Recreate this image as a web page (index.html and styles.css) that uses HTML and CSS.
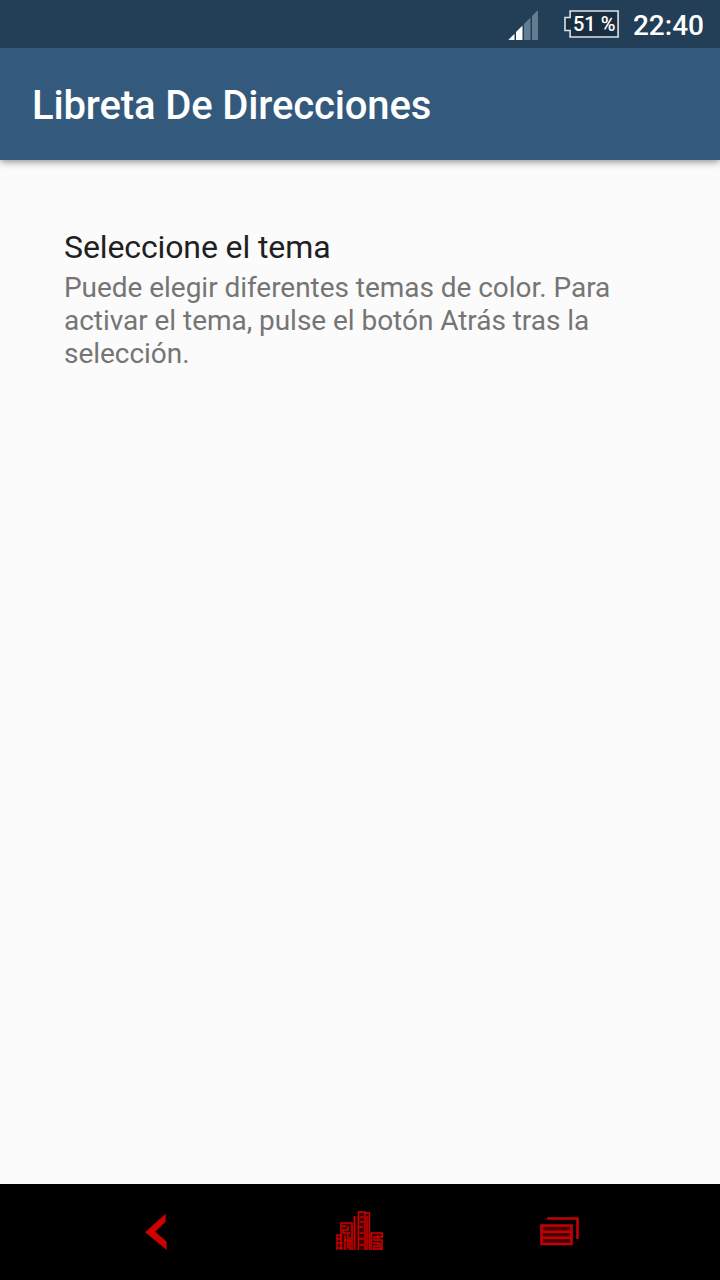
FILE: index.html
```html
<!DOCTYPE html>
<html lang="es">
<head>
<meta charset="utf-8">
<title>Libreta De Direcciones</title>
<link rel="stylesheet" href="styles.css">
</head>
<body>
<div class="screen">
  <div class="status-bar">
    <svg class="signal" width="30" height="30" viewBox="0 0 30 30">
      <path class="signal-on" d="M0.3 30L6.5 23.7V30ZM8 22L14.5 15.5V30H8Z"/>
      <path class="signal-off" d="M16 14L22.5 7.5V30H16ZM24 6L30 0V30H24Z"/>
    </svg>
    <div class="battery">
      <svg class="battery-shape" width="56" height="28" viewBox="0 0 56 28">
        <path d="M6.100 1H54.100V27H6.100V20.500H1V7.500H6.100Z"/>
      </svg>
      <span class="battery-text">51 %</span>
    </div>
    <span class="clock">22:40</span>
  </div>
  <header class="app-bar"><h1 class="title">Libreta De Direcciones</h1></header>
  <main class="content">
    <h2 class="item-title">Seleccione el tema</h2>
    <p class="item-summary">Puede elegir diferentes temas de color. Para<br>activar el tema, pulse el botón Atrás tras la<br>selección.</p>
  </main>
  <nav class="nav-bar">
    <svg class="back" width="24" height="38" viewBox="0 0 24 38">
      <path class="solid" d="M0 19.300L20.800 0.500L20.500 9L10.300 18.700L21.500 28.500L21.800 37Z"/>
    </svg>
    <svg class="home" width="48" height="42" viewBox="0 0 48 42">
      <path class="mass" d="M1 41V26H5V14H17V7H22V2H29V3H34V24H46V41Z"/>
      <g class="building">
        <path d="M5 41V14H16V41M18.500 41V7M22.500 41V3H29V41M33.500 41V4H29M35.500 41V24H46.500V28H38V31H46V41"/>
        <path d="M1 41V26H5V30H1M1 34H7M1 39H7M6 17H10M12 17V21H7V24H14M9 27V41M12 25V39M8 31H12M14 28V41"/>
        <path d="M31 7V41M24 8H28M24 13H28M23 18H27M24 24H28M23 30H28M24 36H28M37 34H42V37H38V41M42 26V32M44 34V41M37 40H46"/>
      </g>
    </svg>
    <svg class="recents" width="40" height="30" viewBox="0 0 40 30">
      <path class="outline" d="M7 2.500H37.500V23"/>
      <path class="outline cards" d="M1.500 9.500H31.500V28H1.500ZM1.500 15.700H31.500M1.500 21.800H31.500"/>
    </svg>
  </nav>
</div>
</body>
</html>
```
FILE: styles.css
```css
body {
  margin: 0;
  font-family: Roboto, "Noto Sans", sans-serif;
}
.screen {
  display: flex;
  flex-direction: column;
  width: 720px;
  height: 1280px;
  background: #fbfbfb;
  overflow: hidden;
}
.status-bar {
  position: relative;
  z-index: 1;
  display: flex;
  justify-content: flex-end;
  align-items: center;
  box-sizing: border-box;
  height: 48px;
  padding: 0 16px 0 0;
  background: #233e57;
  color: #fff;
}
.signal { margin: 2px 26px 0 0; }
.signal-on { fill: #fff; }
.signal-off { fill: #637c90; }
.battery {
  display: grid;
  width: 56px;
  height: 28px;
  margin-right: 13px;
}
.battery-shape, .battery-text { grid-area: 1 / 1; }
.battery-shape path {
  fill: #1b2e40;
  stroke: #d9e2eb;
  stroke-width: 1.6;
}
.battery-text {
  padding-left: 9px;
  font-size: 20px;
  font-weight: 500;
  line-height: 28px;
  white-space: nowrap;
}
.clock {
  font-size: 28px;
  font-weight: 500;
  line-height: 48px;
  padding-top: 3px;
}
.app-bar {
  display: flex;
  align-items: center;
  height: 112px;
  padding: 0 32px;
  background: #335a7c;
  box-shadow: 0 2px 7px rgba(0, 0, 0, .42);
}
.title {
  margin: 4px 0 0;
  color: #fff;
  font-size: 40px;
  font-weight: 500;
  letter-spacing: -.14px;
  line-height: 48px;
  white-space: nowrap;
}
.content {
  flex: 1;
  padding: 68px 64px 0;
}
.item-title {
  margin: 0;
  color: #202020;
  font-size: 32px;
  font-weight: 400;
  letter-spacing: -.11px;
  line-height: 38px;
}
.item-summary {
  margin: 5px 0 0;
  color: #757575;
  font-size: 28px;
  letter-spacing: -.04px;
  line-height: 33px;
  white-space: nowrap;
}
.nav-bar {
  display: flex;
  align-items: flex-start;
  box-sizing: border-box;
  height: 96px;
  padding-left: 145px;
  background: #000;
}
.back { margin-top: 29px; }
.home { margin: 25px 0 0 167px; }
.recents { margin: 32px 0 0 156px; }
.solid { fill: #cb0000; }
.mass { fill: #380000; }
.building path {
  fill: none;
  stroke: #cc0000;
  stroke-width: 1.5;
}
.outline {
  fill: none;
  stroke: #c20008;
  stroke-width: 2.6;
}
.outline.cards { fill: #480000; }
```
